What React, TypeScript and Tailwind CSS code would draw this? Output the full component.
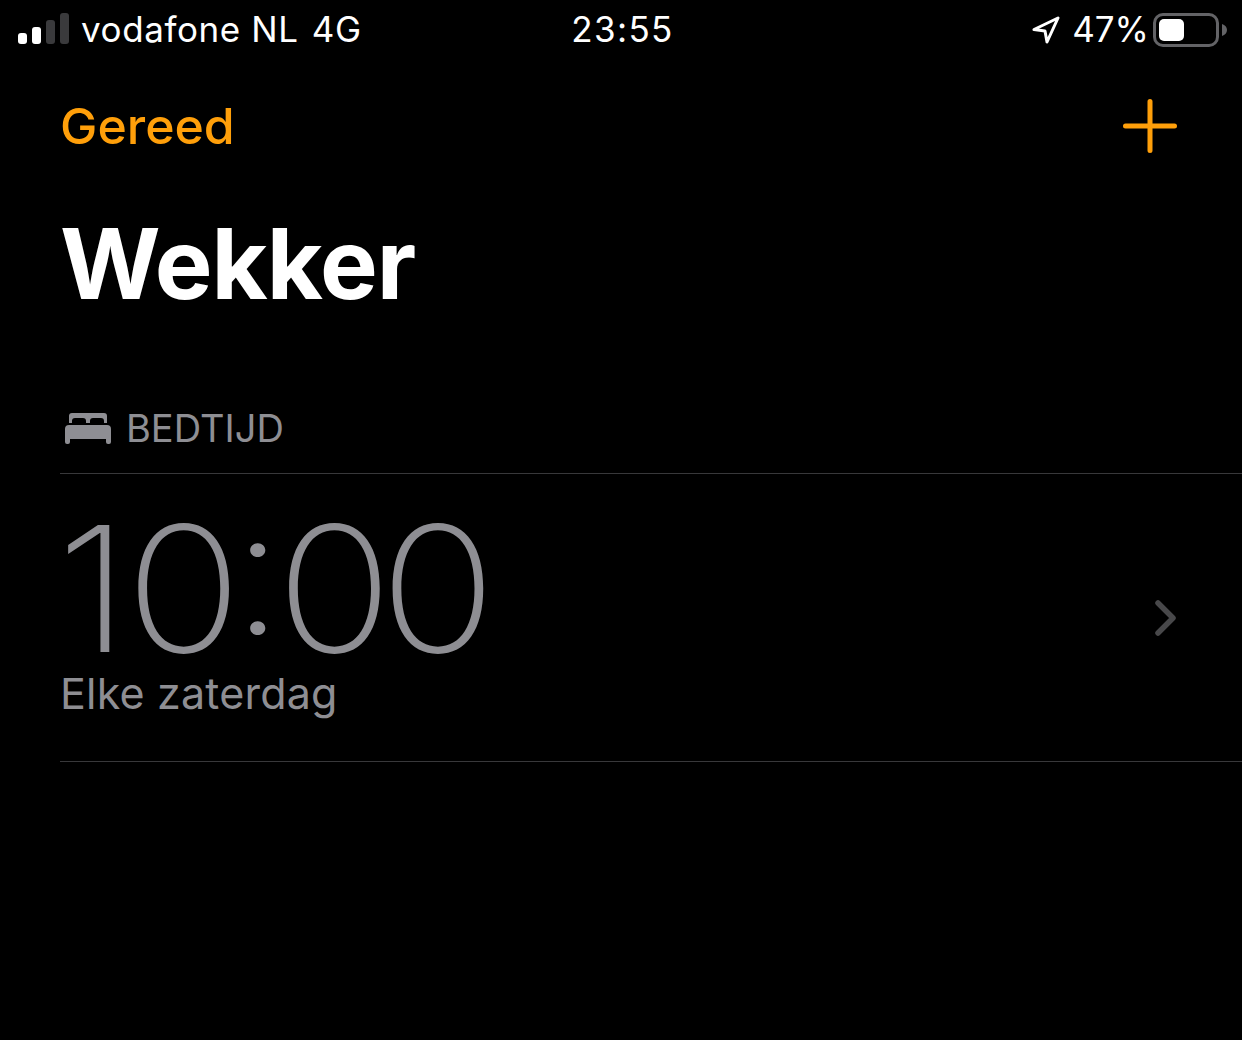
import React from 'react';

function SignalBars() {
    return (
        <svg width="51" height="31" viewBox="0 0 51 31" className="block -mt-[3px]">
            <rect x="0" y="20" width="9" height="11" rx="3" fill="#fff" />
            <rect x="14" y="14" width="9" height="17" rx="3" fill="#fff" />
            <rect x="28" y="7" width="9" height="24" rx="3" fill="#3a3a3c" />
            <rect x="42" y="0" width="9" height="31" rx="3" fill="#3a3a3c" />
        </svg>
    );
}

function LocationArrow() {
    return (
        <svg width="28" height="28" viewBox="0 0 28 28" fill="none" className="block">
            <path d="M2 13.5 26 2 15 26 13 15Z" stroke="#fff" strokeWidth="3" strokeLinejoin="round" />
        </svg>
    );
}

function Battery() {
    return (
        <div className="flex items-center gap-[3px]">
            <div className="w-[66px] h-[34px] rounded-[10px] border-[3px] border-[#636366] p-[3px] flex">
                <div className="w-[25px] h-full rounded-[5px] bg-white" />
            </div>
            <svg width="5" height="12" viewBox="0 0 5 12" className="block">
                <path d="M0 0C3 1 5 3 5 6C5 9 3 11 0 12Z" fill="#636366" />
            </svg>
        </div>
    );
}

function BedIcon() {
    return (
        <svg width="48" height="32" viewBox="0 0 48 32" className="block">
            <path d="M5 11V4a3 3 0 0 1 3-3h32a3 3 0 0 1 3 3v7h-3V9a3 3 0 0 0-3-3H29a3 3 0 0 0-3 3v2h-4V9a3 3 0 0 0-3-3H11a3 3 0 0 0-3 3v2Z" fill="#8e8e93" />
            <path d="M5 13h38a4 4 0 0 1 4 4v13a2 2 0 0 1-2 2h-1a2 2 0 0 1-2-2v-3H6v3a2 2 0 0 1-2 2H3a2 2 0 0 1-2-2V17a4 4 0 0 1 4-4Z" fill="#8e8e93" />
        </svg>
    );
}

export default function App() {
    return (
        <div className="bg-black w-[1242px] h-[1040px] overflow-hidden text-white font-['Inter',sans-serif]">
            {/* STATUS BAR */}
            <div className="h-[60px] grid grid-cols-3 items-center pl-[18px] pr-[15px]">
                <div className="flex items-center">
                    <SignalBars />
                    <span className="ml-[12px] -mt-[2px] text-[35px] tracking-[0.6px] leading-none">vodafone NL</span>
                    <span className="ml-[13px] -mt-[2px] text-[35px] tracking-[0.6px] leading-none">4G</span>
                </div>
                <div className="text-center -mt-[2px] text-[35px] tracking-[1.4px] leading-none">23:55</div>
                <div className="flex items-center justify-end">
                    <LocationArrow />
                    <span className="ml-[12px] mr-[4px] -mt-[2px] text-[35px] leading-none">47%</span>
                    <Battery />
                </div>
            </div>

            {/* NAV */}
            <div className="flex items-center justify-between pl-[60px] pr-[65px] h-[132px]">
                <span className="text-[50px] font-[550] text-[#ff9f0a] leading-none">Gereed</span>
                <svg width="54" height="54" viewBox="0 0 54 54" className="block">
                    <path d="M27 2.5V51.5M2.5 27H51.5" stroke="#ff9f0a" strokeWidth="5" strokeLinecap="round" />
                </svg>
            </div>

            <div className="pl-[60px] h-[191px]">
                <h1 className="text-[97px] font-bold leading-none tracking-[-1px] pt-[23px]">Wekker</h1>
            </div>

            {/* BEDTIME */}
            <div className="ml-[60px]">
                <div className="flex items-center gap-[14px] h-[91px] pl-[4px] border-b border-[#38383a]">
                    <BedIcon />
                    <span className="text-[38px] text-[#8e8e93] leading-none">BEDTIJD</span>
                </div>
                <div className="flex items-center justify-between h-[288px] pr-[65px] border-b border-[#38383a]">
                    <div className="flex flex-col pb-[16px]">
                        <span className="text-[175px] font-[250] text-[#8e8e93] leading-[168px] tracking-[-12px] -ml-[4px] origin-left scale-x-[1.105] whitespace-pre">
                            <span className="tracking-[-4px]">1</span>
                            <span className="tracking-[-10px]">0</span>
                            <span className="inline-block -translate-y-[18px] tracking-[-7.5px]">:</span>00
                        </span>
                        <span className="text-[43px] text-[#8e8e93] leading-none tracking-[0.2px]">Elke zaterdag</span>
                    </div>
                    <svg width="21" height="36" viewBox="0 0 21 36" fill="none" className="block mr-[1px]">
                        <path d="M3 3 18 18 3 33" stroke="#48484a" strokeWidth="5.5" strokeLinecap="round" strokeLinejoin="round" />
                    </svg>
                </div>
            </div>
        </div>
    );
}
